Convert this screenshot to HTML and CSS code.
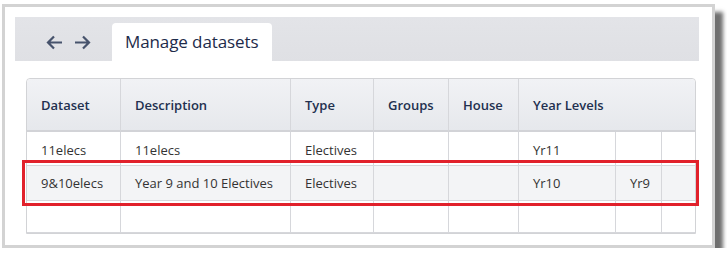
FILE: index.html
```html
<!DOCTYPE html>
<html>
    <head>
        <title>Manage datasets</title>
        <link rel="stylesheet" href="styles.css">
    </head>
    <body>
        <div class="frame">
            <div class="tabbar">
                <div class="nav">
                    <svg class="arrow" width="17" height="15" viewBox="0 0 17 15"><path d="M16 7.5H2M8 1.5l-6 6 6 6"/></svg>
                    <svg class="arrow" width="17" height="15" viewBox="0 0 17 15"><path d="M1 7.5h14M9 1.5l6 6-6 6"/></svg>
                </div>
                <div class="tab">Manage datasets</div>
            </div>

            <div class="grid-wrap">
                <table class="grid">
                    <colgroup>
                        <col style="width:94px"><col style="width:170px"><col style="width:83px"><col style="width:75px">
                        <col style="width:70px"><col style="width:97px"><col style="width:46px"><col style="width:33px">
                    </colgroup>
                    <thead>
                        <tr>
                            <th>Dataset</th>
                            <th>Description</th>
                            <th>Type</th>
                            <th>Groups</th>
                            <th>House</th>
                            <th colspan="3">Year Levels</th>
                        </tr>
                    </thead>
                    <tbody>
                        <tr class="row1">
                            <td>11elecs</td>
                            <td>11elecs</td>
                            <td>Electives</td>
                            <td></td>
                            <td></td>
                            <td>Yr11</td>
                            <td></td>
                            <td></td>
                        </tr>
                        <tr class="row2 selected">
                            <td>9&amp;10elecs</td>
                            <td>Year 9 and 10 Electives</td>
                            <td>Electives</td>
                            <td></td>
                            <td></td>
                            <td>Yr10</td>
                            <td>Yr9</td>
                            <td></td>
                        </tr>
                        <tr class="row3">
                            <td></td><td></td><td></td><td></td><td></td><td></td><td></td><td></td>
                        </tr>
                    </tbody>
                </table>
                <div class="highlight"></div>
            </div>
        </div>
    </body>
</html>
```

FILE: styles.css
```css
body {
    margin: 0;
    font-family: "Open Sans", "Noto Sans", sans-serif;
    background: #ffffff;
}
.frame {
    margin: 4px 0 0 2px;
    width: 713px;
    height: 244px;
    box-sizing: border-box;
    border: 3px solid #d3d3d3;
    background: #ffffff;
    box-shadow: 8px 8px 4px #6f6f6f;
    padding: 10px 13px 0 10px;
}
.tabbar {
    height: 44px;
    background: linear-gradient(#e3e4e8, #dfe0e4);
    display: flex;
    align-items: flex-end;
}
.nav {
    display: flex;
    gap: 11px;
    align-items: center;
    padding: 0 0 11px 31px;
    width: 66px;
}
.arrow {
    fill: none;
    stroke: #47536c;
    stroke-width: 2.2;
}
.tab {
    background: #ffffff;
    height: 38px;
    width: 160px;
    box-sizing: border-box;
    border-radius: 4px 4px 0 0;
    padding: 7px 0 0 13px;
    font-size: 17px;
    color: #1d2b4a;
    letter-spacing: -0.1px;
}
.grid-wrap {
    position: relative;
    margin: 17px 0 0 11px;
    width: 668px;
}
.grid {
    border-collapse: separate;
    border-spacing: 0;
    table-layout: fixed;
    width: 668px;
    font-size: 13px;
    color: #333333;
    border: 1px solid #d2d3d6;
    border-radius: 4px 4px 0 0;
}
.grid th {
    height: 53px;
    box-sizing: border-box;
    text-align: left;
    font-weight: 600;
    color: #22304f;
    padding: 0 0 0 14px;
    background: linear-gradient(#f1f2f5, #e6e8ec);
    border-right: 1px solid #d6d7db;
    border-bottom: 2px solid #d2d3d7;
}
.grid td {
    box-sizing: border-box;
    padding: 0 0 0 14px;
    border-right: 1px solid #d6d7db;
    border-bottom: 1px solid #d6d7db;
    white-space: nowrap;
}
.grid th:last-child, .grid td:last-child {
    border-right: none;
}
.grid th:first-child {
    border-top-left-radius: 4px;
}
.grid th:last-child {
    border-top-right-radius: 4px;
}
.row1 td {
    height: 34px;
    padding-top: 2px;
}
.row2 td {
    height: 35px;
}
.row3 td {
    height: 32px;
}
.selected td {
    background: #f3f4f6;
}
.highlight {
    position: absolute;
    left: -4px;
    top: 82px;
    width: 677px;
    height: 46px;
    box-sizing: border-box;
    border: 3px solid #e1212b;
}
```
